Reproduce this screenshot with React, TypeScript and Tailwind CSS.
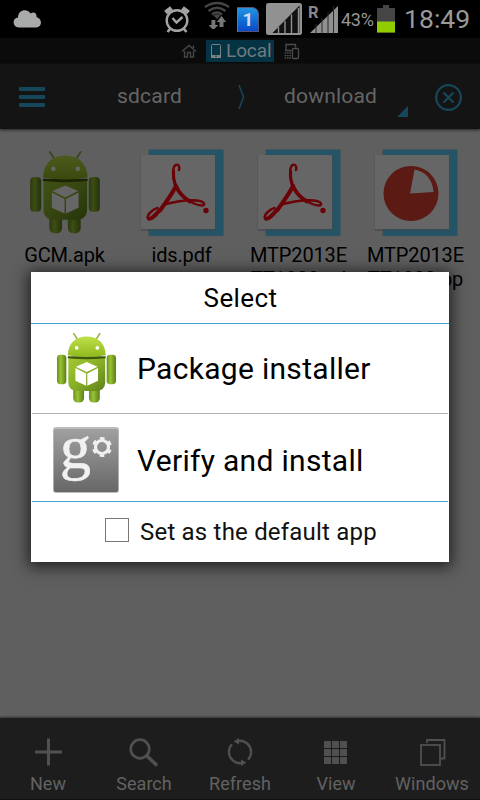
import type { ReactNode } from 'react';

function Android({ className }: { className: string }) {
  return (
    <svg viewBox="0 0 62 72" className={className}>
      <defs>
        <linearGradient id="head" x1="0" y1="0" x2="0" y2="1">
          <stop offset="0" stopColor="#bfe04a" />
          <stop offset="1" stopColor="#8fb91f" />
        </linearGradient>
        <linearGradient id="body" x1="0" y1="0" x2="1" y2="1">
          <stop offset="0" stopColor="#a3c935" />
          <stop offset="0.5" stopColor="#88ae28" />
          <stop offset="1" stopColor="#5d8018" />
        </linearGradient>
        <linearGradient id="limb" x1="0" y1="0" x2="1" y2="0">
          <stop offset="0" stopColor="#6c8f20" />
          <stop offset="0.4" stopColor="#98c234" />
          <stop offset="1" stopColor="#5b7d18" />
        </linearGradient>
      </defs>
      <path d="M18 1.500l4.500 7M44.500 1.500L40 8.500" stroke="#94b04a" strokeWidth="1.600" strokeLinecap="round" />
      <rect x="17.500" y="54" width="11" height="17.500" rx="4.500" fill="url(#limb)" />
      <rect x="33.500" y="54" width="11" height="17.500" rx="4.500" fill="url(#limb)" />
      <rect x="1" y="23" width="9.500" height="30" rx="3.500" fill="url(#limb)" />
      <rect x="51.500" y="23" width="9.500" height="30" rx="3.500" fill="url(#limb)" />
      <path d="M12.500 26H50V51Q50 60 40 60H22.500Q12.500 60 12.500 51Z" fill="url(#body)" />
      <path d="M12 24.500H50.500V26.500Q31 28.500 12 26.500Z" fill="#3e5a0a" />
      <path d="M12 23.500C12.500 11 20 4.500 31.200 4.500S50 11 50.500 23.500Q31 27 12 23.500Z" fill="url(#head)" />
      <circle cx="21" cy="16" r="1.900" fill="#fff" />
      <circle cx="42" cy="16" r="1.900" fill="#fff" />
      <path d="M31.200 30.500L20.200 35.200 31.200 40.700 42.200 35.200Z" fill="#fff" />
      <path d="M19.700 36.500L30.600 42V54.500L19.700 49.500Z" fill="#fff" />
      <path d="M42.700 36.500L31.800 42V54.500L42.700 49.500Z" fill="#fff" />
    </svg>
  );
}

function Doc({ children }: { children: ReactNode }) {
  return (
    <svg viewBox="0 0 84 88" className="h-[88px] w-[84px]">
      <rect x="8.500" y="0.500" width="75" height="86.500" rx="1.500" fill="#265467" stroke="#48545a" strokeWidth="0.800" />
      <rect x="0.500" y="6" width="75.500" height="76" fill="#404648" opacity="0.550" />
      <rect x="1" y="6" width="74" height="74" fill="#666" />
      {children}
    </svg>
  );
}

function Acrobat() {
  return (
    <g fill="none" stroke="#6a0208" strokeLinecap="round" strokeLinejoin="round">
      <path d="M39 21C40 17.500 38.500 15 36 15.800C32 17.500 32.500 27 35.500 36" strokeWidth="2.400" />
      <path d="M33.500 22C33 28 34 33 36 38" strokeWidth="3" />
      <path d="M35.800 37C40 46 46 51 54 54.500C60 57 65 57.500 64 54.500C62 50 45 50 26 55" strokeWidth="2.400" />
      <path d="M36 37C32 45 27 52 20 61.500" strokeWidth="4" />
      <path d="M17.500 59C12 60.500 6.500 66.500 8 69.500C10 72 15.500 68 20 61.500" strokeWidth="2.600" />
      <path d="M9 69.800C12 69 16 65 19.500 61" strokeWidth="3.400" />
      <path d="M36 37C39 44 44 49 50 52.500" strokeWidth="3.800" />
      <circle cx="66" cy="61.500" r="2.700" fill="#6a0208" stroke="none" />
    </g>
  );
}

function FileItem({ lines, children }: { lines: string[]; children: ReactNode }) {
  return (
    <div className="flex w-[117px] flex-col items-center">
      <div className="flex h-[94px] items-start justify-center">{children}</div>
      {lines.map((l) => (
        <div key={l} className="h-6 text-[20px] leading-6 tracking-[-0.15px] whitespace-nowrap text-black">{l}</div>
      ))}
    </div>
  );
}

function StatusBar() {
  return (
    <div className="flex h-[38px] items-center bg-black text-[#969696]">
      <svg viewBox="0 0 30 20" className="ml-[13px] h-5 w-[30px]">
        <path d="M6 18.500C-1 18-1 9 5 8.500C5 1 14-1 17.500 4.500C21 2 24 4.500 23.500 8C30 10 29 18.500 23 18.500Z" fill="#a9abaa" />
      </svg>
      <svg viewBox="0 0 26 27" className="ml-[121px] h-[27px] w-[26px]" fill="none" stroke="#a3a3a3">
        <circle cx="13" cy="14.500" r="10.300" strokeWidth="2.400" />
        <path d="M8.500 12l4 4.500 6-5.500" strokeWidth="2.400" />
        <path d="M1.500 6.500L7.500 2M24.500 6.500L18.500 2" strokeWidth="4.500" />
        <path d="M6 23L3.500 26M20 23l2.500 3" strokeWidth="2.600" />
      </svg>
      <svg viewBox="0 0 26 28" className="ml-[14px] -mt-2 h-[28px] w-[26px]" fill="none" stroke="#454545" strokeWidth="2.600">
        <path d="M1 6Q13-2 25 6M4.500 10Q13 3.500 21.500 10M8 13.500Q13 9.500 18 13.500" />
        <path d="M9.500 14.500Q13 12 16.500 14.500L13 18Z" fill="#454545" stroke="none" />
        <path d="M7.500 19h3.800v5h3l-4.900 5-4.900-5h3zM15.500 26v-5h-2.700l4.700-6 4.700 6h-2.700v5z" fill="#777" stroke="none" />
      </svg>
      <div className="ml-[7px] flex h-[25px] w-[22px] items-center justify-center rounded-tr-[7px] border border-[#557] border-l-[#777] bg-linear-to-b from-[#2593e2] to-[#0c49c7] text-[19px] leading-[23px] font-bold text-[#d0dce8]">1</div>
      <svg viewBox="0 0 36 32" className="ml-[7px] h-8 w-9">
        <rect width="36" height="32" rx="2.500" fill="#919191" />
        <path d="M33.500 2.500V30H6.500Z" fill="#111" />
        <path d="M12.500 24v6M19 18v12M25.500 11.500v18.500M32.500 5v25" stroke="#919191" strokeWidth="1.400" />
      </svg>
      <div className="ml-[6px] flex h-[30px] w-8 items-start">
        <span className="w-[11px] text-[16.500px] leading-[18px] font-bold text-[#888]">R</span>
        <svg viewBox="0 0 32 30" className="-ml-[11px] h-[30px] w-8 shrink-0">
          <path d="M30 2V29H2Z" fill="#909090" />
          <path d="M8 20v10M14 14v16M20 8v22M25.500 2v28" stroke="#292929" strokeWidth="1" />
        </svg>
      </div>
      <span className="ml-px w-[36px] text-[18px] tracking-[-0.3px]">43%</span>
      <svg viewBox="0 0 18 28" className="h-7 w-[18px]">
        <path d="M6 0H12V3H18V27.500H0V3H6Z" fill="#454545" />
        <path d="M0 16.500H18V27.500H0Z" fill="#91cc00" />
      </svg>
      <span className="ml-[9px] text-[26.500px] tracking-[0.050px] text-[#999]">18:49</span>
    </div>
  );
}

function Action({ label, children }: { label: string; children: ReactNode }) {
  return (
    <div className="flex w-24 flex-col items-center">
      <svg viewBox="0 0 30 30" className="mt-[19px] h-[30px] w-[30px]" fill="none" stroke="#505050">{children}</svg>
      <span className="mt-[5px] text-[18px] leading-[24px] tracking-[0.050px] text-[#626262]">{label}</span>
    </div>
  );
}

export default function App() {
  return (
    <div className="relative flex h-[800px] w-[480px] flex-col overflow-hidden bg-[#5f5f5f] font-[Roboto,sans-serif]">
      <StatusBar />
      <div className="flex h-[26px] items-center bg-[#0b0b0b]">
        <svg viewBox="0 0 16 14" className="ml-[181px] h-[14px] w-4" fill="none" stroke="#464646" strokeWidth="1.400">
          <path d="M1 7.500L8 1.500 15 7.500M3.500 7V13H6.500V8.500H9.500V13H12.500V7M12.500 4V1.500" />
        </svg>
        <div className="ml-[9px] flex h-[22px] w-[68px] items-center bg-[#043344] text-[#707a7e]">
          <svg viewBox="0 0 10 14" className="ml-[5px] h-[14px] w-[10px]">
            <rect x="0.500" y="0.500" width="9" height="13" rx="1" fill="none" stroke="#7b8386" />
            <path d="M0 11h10v3H0z" fill="#7b8386" />
            <circle cx="5" cy="12.300" r="0.800" fill="#043344" />
          </svg>
          <span className="ml-[5px] text-[19px] leading-[22px] tracking-[-0.1px]">Local</span>
        </div>
        <svg viewBox="0 0 16 17" className="ml-[10px] h-[17px] w-4" fill="none" stroke="#4b4b4b" strokeWidth="1.300">
          <path d="M2 7.500V1.500H11.500V4.500M1 7.500H7.500" />
          <rect x="8.500" y="5.500" width="6" height="10" rx="1" />
          <path d="M0.500 10h6.500M0.500 12.700h6.500M0.500 15h6.500" strokeDasharray="1.700 0.700" />
        </svg>
      </div>
      <div className="flex h-[65px] shrink-0 items-center bg-[#141414] text-[21px] text-[#666] shadow-[0_1px_3px_#222]">
        <div className="ml-[19px] flex w-[26px] flex-col gap-1">
          <i className="h-1 rounded-[1px] bg-[#15465a]" />
          <i className="h-1 rounded-[1px] bg-[#15465a]" />
          <i className="h-1 rounded-[1px] bg-[#15465a]" />
        </div>
        <span className="ml-[72px] w-[67px] tracking-[0.2px]">sdcard</span>
        <svg viewBox="0 0 8 26" className="ml-[54px] h-[26px] w-2" fill="none" stroke="#15465a" strokeWidth="1.600">
          <path d="M1 1L5.500 13 1 25" />
        </svg>
        <span className="ml-[38px] w-[94px] tracking-[0.2px]">download</span>
        <svg viewBox="0 0 11 11" className="mt-[30px] ml-[19px] h-[11px] w-[11px]"><path d="M11 0V11H0Z" fill="#15465a" /></svg>
        <svg viewBox="0 0 28 28" className="mt-[2px] ml-[26px] h-7 w-7" fill="none" stroke="#15465a" strokeWidth="2.300">
          <circle cx="14.500" cy="13.500" r="12.300" />
          <path d="M9.500 8.500l10 10M19.500 8.500l-10 10" />
        </svg>
      </div>
      <div className="flex grow items-start px-[6px] pt-[20px]">
        <FileItem lines={['GCM.apk']}><Android className="mt-[1px] h-[84px] w-[72px] brightness-[0.4]" /></FileItem>
        <FileItem lines={['ids.pdf']}><Doc><Acrobat /></Doc></FileItem>
        <FileItem lines={['MTP2013E', 'TT1800.pd']}><Doc><Acrobat /></Doc></FileItem>
        <FileItem lines={['MTP2013E', 'TT1800.pp']}>
          <Doc>
            <circle cx="37" cy="44.500" r="27.500" fill="#5b1a13" />
            <path d="M36 44.500L40.500 20.500C51 22 59 31 59.500 43Z" fill="#666" />
          </Doc>
        </FileItem>
      </div>
      <div className="flex h-[82px] border-b border-[#120f12] bg-[#1d1d1d] shadow-[0_-1px_2px_#333]">
        <Action label="New"><path d="M15.500 1.500v27M2 15h27" strokeWidth="3" /></Action>
        <Action label="Search">
          <circle cx="11" cy="12" r="9.300" strokeWidth="2.700" />
          <path d="M18 19l9 8.500" strokeWidth="3.600" strokeLinecap="round" />
        </Action>
        <Action label="Refresh">
          <path d="M7 7.200A11.300 11.300 0 0 0 18 25.900M12 4.100A11.300 11.300 0 0 1 23 22.800" strokeWidth="2.400" />
          <path d="M8.500 4.500L14 1V7.500ZM21.500 25.500L16 29V22.500Z" fill="#505050" stroke="none" />
        </Action>
        <Action label="View">
          <g fill="#505050" stroke="none">
            {[4, 12, 20].map((y) => [3, 11, 19].map((x) => <rect key={`${x}-${y}`} x={x} y={y} width="7" height="7" rx="0.500" />))}
          </g>
        </Action>
        <Action label="Windows">
          <path d="M10 6V3H27.500V21.500H23.500" strokeWidth="1.800" />
          <rect x="4" y="8" width="19" height="20" strokeWidth="1.800" />
        </Action>
      </div>

      {/* App chooser dialog, floating over the file list */}
      <div className="absolute top-[272px] left-[31px] flex h-[290px] w-[418px] flex-col bg-white text-black shadow-[0_2px_14px_3px_rgba(0,0,0,0.65)]">
        <div className="flex h-[52px] items-center justify-center border-b border-[#3fa5cc] pt-[2px] pl-px text-[26px] tracking-[0.4px]">Select</div>
        <div className="mx-px flex h-[90px] items-center border-b border-[#b3b3b3] text-[30px] tracking-[0.3px]">
          <Android className="mb-[2px] ml-[24px] h-[71px] w-[61px]" />
          <span className="ml-[20px]">Package installer</span>
        </div>
        <div className="mx-px flex h-[88px] items-center border-b border-[#3fa5cc] pt-[5px] text-[30px] tracking-[0.3px]">
          <svg viewBox="0 0 66 66" className="ml-[21px] h-[66px] w-[66px]">
            <defs>
              <linearGradient id="tile" x1="0" y1="0" x2="0" y2="1">
                <stop offset="0" stopColor="#a0a0a0" />
                <stop offset="1" stopColor="#676767" />
              </linearGradient>
            </defs>
            <rect width="66" height="66" rx="3" fill="#bdbdbd" />
            <rect x="0.800" y="2" width="64.400" height="63" rx="2" fill="url(#tile)" />
            <text x="7" y="41" letterSpacing="0" fontSize="62" fontFamily="Liberation Serif, serif" fill="#f3f0f0" stroke="#f3f0f0" strokeWidth="0.600">g</text>
            <g stroke="#f1eeee" fill="none">
              <circle cx="49" cy="20" r="6.500" strokeWidth="3.200" />
              <circle cx="49" cy="20" r="8.600" strokeWidth="2.800" strokeDasharray="4.500 4.506" strokeDashoffset="2.250" transform="rotate(30 49 20)" />
            </g>
          </svg>
          <span className="ml-[18px]">Verify and install</span>
        </div>
        <div className="flex h-[60px] items-center pl-[74px] text-[24px] tracking-[0.2px] text-[#111]">
          <span className="mb-[4px] h-6 w-6 border border-[#777]" />
          <span className="ml-[11px]">Set as the default app</span>
        </div>
      </div>
    </div>
  );
}
